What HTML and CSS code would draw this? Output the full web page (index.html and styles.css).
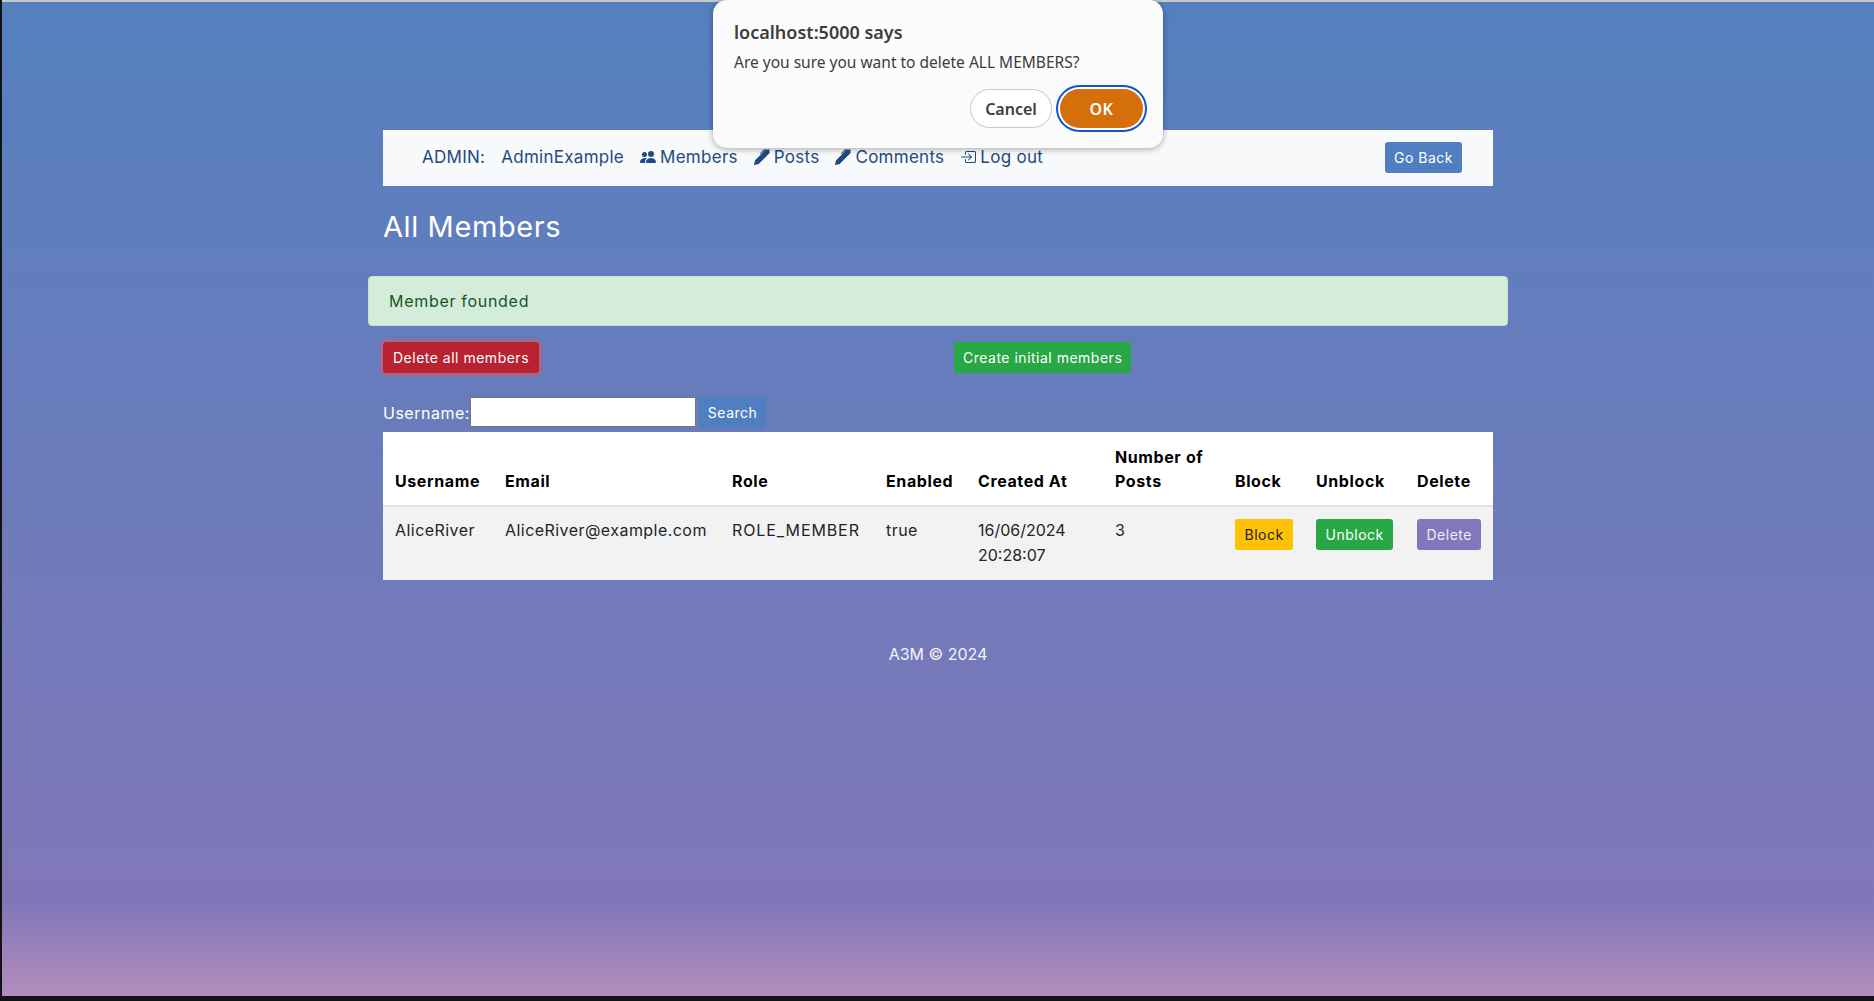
FILE: index.html
```html
<!DOCTYPE html>
<html lang="en">
<head>
  <meta charset="UTF-8" />
  <title>All Members</title>
  <link rel="stylesheet" href="styles.css">
</head>
<body>
  <div class="page">
    <div class="container">
      <nav class="navbar">
        <div class="nav-links">
          <span class="nav-item">ADMIN:</span>
          <a class="nav-item" href="#">AdminExample</a>
          <a class="nav-item" href="#">
            <svg class="icon" viewBox="0 0 16 16"><path d="M7 14s-1 0-1-1 1-4 5-4 5 3 5 4-1 1-1 1H7Zm4-6a3 3 0 1 0 0-6 3 3 0 0 0 0 6Zm-5.784 6A2.238 2.238 0 0 1 5 13c0-1.355.68-2.75 1.936-3.72A6.325 6.325 0 0 0 5 9c-4 0-5 3-5 4s1 1 1 1h4.216ZM4.5 8a2.5 2.5 0 1 0 0-5 2.5 2.5 0 0 0 0 5Z"/></svg>
            Members
          </a>
          <a class="nav-item" href="#">
            <svg class="icon" viewBox="0 0 16 16"><path d="m13.498.795.149-.149a1.207 1.207 0 1 1 1.707 1.708l-.149.148a1.5 1.5 0 0 1-.059 2.059L4.854 14.854a.5.5 0 0 1-.233.131l-4 1a.5.5 0 0 1-.606-.606l1-4a.5.5 0 0 1 .131-.232l9.642-9.642a.5.5 0 0 0-.642.056L6.854 4.854a.5.5 0 1 1-.708-.708L9.44.854A1.5 1.5 0 0 1 11.5.796a1.5 1.5 0 0 1 1.998-.001z"/></svg>
            Posts
          </a>
          <a class="nav-item" href="#">
            <svg class="icon" viewBox="0 0 16 16"><path d="m13.498.795.149-.149a1.207 1.207 0 1 1 1.707 1.708l-.149.148a1.5 1.5 0 0 1-.059 2.059L4.854 14.854a.5.5 0 0 1-.233.131l-4 1a.5.5 0 0 1-.606-.606l1-4a.5.5 0 0 1 .131-.232l9.642-9.642a.5.5 0 0 0-.642.056L6.854 4.854a.5.5 0 1 1-.708-.708L9.44.854A1.5 1.5 0 0 1 11.5.796a1.5 1.5 0 0 1 1.998-.001z"/></svg>
            Comments
          </a>
          <a class="nav-item" href="#">
            <svg class="icon" viewBox="0 0 16 16"><path d="M6 3.5a.5.5 0 0 1 .5-.5h8a.5.5 0 0 1 .5.5v9a.5.5 0 0 1-.5.5h-8a.5.5 0 0 1-.5-.5v-2a.5.5 0 0 0-1 0v2A1.5 1.5 0 0 0 6.5 14h8a1.5 1.5 0 0 0 1.5-1.5v-9A1.5 1.5 0 0 0 14.5 2h-8A1.5 1.5 0 0 0 5 3.5v2a.5.5 0 0 0 1 0v-2z"/><path d="M11.854 8.354a.5.5 0 0 0 0-.708l-3-3a.5.5 0 1 0-.708.708L10.293 7.5H1.5a.5.5 0 0 0 0 1h8.793l-2.147 2.146a.5.5 0 0 0 .708.708l3-3z"/></svg>
            Log out
          </a>
        </div>
        <a class="btn btn-primary" href="#">Go Back</a>
      </nav>

      <h2 class="page-title">All Members</h2>

      <div class="alert">Member founded</div>

      <div class="actions">
        <div class="action-col"><button class="btn btn-danger">Delete all members</button></div>
        <div class="action-col"><button class="btn btn-success">Create initial members</button></div>
      </div>

      <form class="search">
        <label class="search-label" for="username">Username:</label>
        <input class="search-input" id="username" type="text">
        <button class="btn btn-primary" type="button">Search</button>
      </form>

      <table class="table">
        <colgroup>
          <col class="c-user"><col class="c-email"><col class="c-role"><col class="c-enabled"><col class="c-created">
          <col class="c-posts"><col class="c-block"><col class="c-unblock"><col class="c-delete">
        </colgroup>
        <thead>
          <tr>
            <th>Username</th>
            <th>Email</th>
            <th>Role</th>
            <th>Enabled</th>
            <th>Created At</th>
            <th>Number of Posts</th>
            <th>Block</th>
            <th>Unblock</th>
            <th>Delete</th>
          </tr>
        </thead>
        <tbody>
          <tr>
            <td>AliceRiver</td>
            <td>AliceRiver@example.com</td>
            <td class="cell-role">ROLE_MEMBER</td>
            <td>true</td>
            <td class="cell-date">16/06/2024 20:28:07</td>
            <td>3</td>
            <td><button class="btn btn-warning">Block</button></td>
            <td><button class="btn btn-success">Unblock</button></td>
            <td><button class="btn btn-purple">Delete</button></td>
          </tr>
        </tbody>
      </table>

      <footer class="footer">A3M © 2024</footer>
    </div>

    <div class="dialog" role="dialog">
      <div class="dialog-title">localhost:5000 says</div>
      <div class="dialog-text">Are you sure you want to delete ALL MEMBERS?</div>
      <div class="dialog-buttons">
        <button class="dlg-btn dlg-cancel">Cancel</button>
        <button class="dlg-btn dlg-ok">OK</button>
      </div>
    </div>
  </div>
</body>
</html>
```

FILE: styles.css
```css
html, body {
  height: 100%;
  margin: 0;
  overflow: hidden;
  background: #121212;
  font-family: Inter, "Open Sans", sans-serif;
  font-size: 16px;
}

.page {
  position: relative;
  height: 996px;
  margin-left: 2px;
  padding-top: 130px;
  box-sizing: border-box;
  border-top: 2px solid #c8c8c8;
  background: linear-gradient(180deg, #5480bf 0%, #8177b8 90.5%, #b38cbd 100%);
}

.container {
  width: 1110px;
  margin: -2px auto 0;
}

/* nav */
.navbar {
  display: flex;
  align-items: center;
  justify-content: space-between;
  height: 56px;
  padding: 0 31px 2px 39px;
  box-sizing: border-box;
  background: #f8f9fa;
}

.nav-links {
  display: flex;
  align-items: center;
  gap: 16px;
}

.nav-item {
  display: flex;
  align-items: center;
  gap: 4px;
  font-size: 17px;
  letter-spacing: 0.27px;
  color: #234a80;
  text-decoration: none;
  white-space: nowrap;
}

.icon {
  width: 16px;
  height: 16px;
  fill: currentColor;
}

.page-title {
  margin: 24px 0 32px;
  font-size: 29px;
  line-height: 34px;
  letter-spacing: 0.6px;
  font-weight: 400;
  color: #fff;
}

.alert {
  margin: 0 -15px 16px;
  padding: 12px 20px;
  height: 50px;
  box-sizing: border-box;
  background: #d4edda;
  border: 1px solid #c3e6cb;
  border-radius: 4px;
  color: #155724;
  letter-spacing: 0.7px;
  line-height: 24px;
}

/* buttons */
.btn {
  display: inline-block;
  padding: 0 8px;
  height: 31px;
  line-height: 29px;
  box-sizing: border-box;
  font-family: inherit;
  font-size: 14px;
  letter-spacing: 0.5px;
  border: 1px solid transparent;
  border-radius: 3px;
  color: #fff;
  text-decoration: none;
  white-space: nowrap;
}

.btn-primary { background: #4f7fc0; }
.btn-success { background: #28a745; }
.btn-warning { background: #ffc107; color: #212529; }
.btn-purple { background: #8376ba; color: #eee; }
.btn-danger {
  padding: 0 9px;
  background: #b92231;
  box-shadow: 0 0 0 3px rgba(225, 83, 97, 0.5);
}

.actions {
  display: flex;
}

.action-col:first-child {
  width: 571px;
}

.search {
  display: flex;
  align-items: center;
  height: 31px;
  margin-top: 24px;
}

.search-label {
  color: #fff;
  font-size: 16px;
  letter-spacing: 0.5px;
}

.search-input {
  width: 226px;
  height: 30px;
  box-sizing: border-box;
  margin-right: 3px;
  align-self: flex-start;
  border: 1px solid #767676;
  background: #fff;
}

/* table */
.table {
  width: 100%;
  margin-top: 4px;
  border-collapse: collapse;
  table-layout: fixed;
  font-size: 16px;
  color: #212529;
}

.c-user { width: 110px; }
.c-email { width: 227px; }
.c-role { width: 154px; }
.c-enabled { width: 92px; }
.c-created { width: 137px; }
.c-posts { width: 120px; }
.c-block { width: 81px; }
.c-unblock { width: 101px; }
.c-delete { width: 88px; }

.table th {
  padding: 13px 12px 12px;
  background: #fff;
  color: #000;
  font-weight: 700;
  text-align: left;
  vertical-align: bottom;
  line-height: 24px;
  letter-spacing: 0.6px;
  border-bottom: 2px solid #dee2e6;
}

.table td {
  padding: 11px 12px 12px;
  background: #f2f2f2;
  vertical-align: top;
  line-height: 24px;
  letter-spacing: 0.45px;
}

.table td.cell-role { letter-spacing: 0.9px; }
.table td.cell-date { letter-spacing: 0; line-height: 25px; }

.table td .btn {
  margin-top: 1px;
  padding: 0 8.5px;
  vertical-align: top;
}

.footer {
  margin-top: 62px;
  text-align: center;
  color: #f4f4f8;
  line-height: 24px;
}

/* browser confirm */
.dialog {
  position: absolute;
  top: -2px;
  left: 711px;
  width: 450px;
  height: 148px;
  box-sizing: border-box;
  padding: 20px 20px 0 21px;
  background: #fbfbfc;
  border-radius: 14px;
  box-shadow: 0 1px 6px rgba(0, 0, 0, 0.35);
  font-family: "Noto Sans", sans-serif;
  color: #3d3d3d;
}

.dialog-title {
  font-size: 18px;
  font-weight: 600;
  line-height: 24px;
}

.dialog-text {
  margin-top: 8px;
  font-size: 15.5px;
  line-height: 20px;
}

.dialog-buttons {
  display: flex;
  justify-content: flex-end;
  gap: 8px;
  margin-top: 17px;
}

.dlg-btn {
  height: 39px;
  font-family: inherit;
  font-size: 16px;
  font-weight: 600;
  border-radius: 20px;
}

.dlg-cancel {
  width: 82px;
  background: #fff;
  border: 1px solid #c8c8c8;
  color: #3d3d3d;
}

.dlg-ok {
  width: 83px;
  background: #d46f0c;
  border: none;
  color: #fff;
  letter-spacing: 0.5px;
  box-shadow: 0 0 0 2px #fff, 0 0 0 4px #0f57c9;
}
```
